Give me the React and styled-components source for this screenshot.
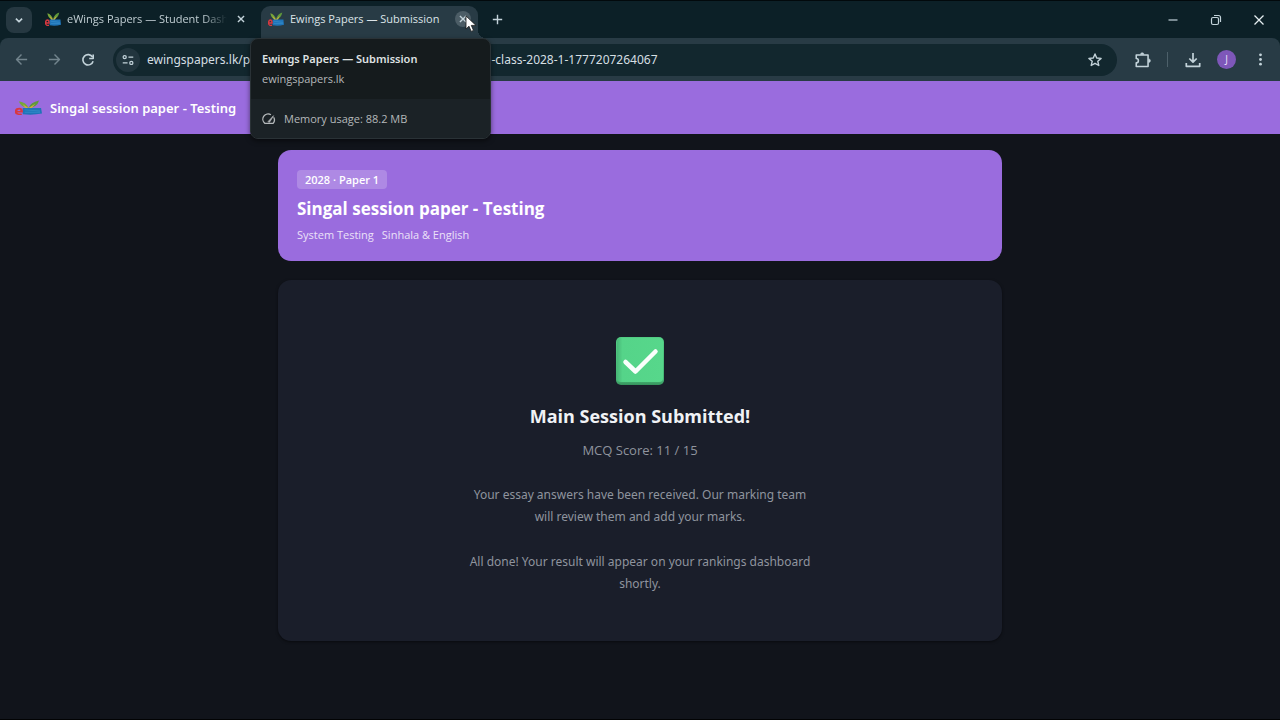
import React from "react";
import styled, { createGlobalStyle } from "styled-components";

const GlobalStyle = createGlobalStyle`
  *, *::before, *::after { box-sizing: border-box; }
  html, body { margin: 0; background: #11141b; }
  body { font-family: "Open Sans", "Noto Sans", sans-serif; font-size: 13px; color: #e8eaed; }
  button, input { font: inherit; color: inherit; border: 0; padding: 0; margin: 0; background: none; }
  h1, h2, p { margin: 0; }
`;

const Window = styled.div`
  display: flex;
  flex-direction: column;
  min-height: 100vh;
  background: #11141b;
  border-top: 1px solid #02090c;
  border-bottom: 1px solid #020304;
`;

const TabStrip = styled.div`
  display: flex;
  align-items: flex-end;
  height: 37px;
  padding-left: 6px;
  background: #0c2027;
`;

const IconButton = styled.button`
  display: flex;
  align-items: center;
  justify-content: center;
  flex: none;
  width: ${(p) => p.$width || 33}px;
  height: ${(p) => p.$height || 32}px;
  color: ${(p) => p.$color || "#c3d3da"};
`;

const TabSearch = styled(IconButton)`
  align-self: center;
  border-radius: 8px;
  background: #263841;
`;

const Tab = styled.div`
  position: relative;
  display: flex;
  align-items: center;
  flex: none;
  gap: 6px;
  width: ${(p) => p.$width}px;
  height: 32px;
  margin-left: ${(p) => p.$gap}px;
  padding: 0 7px 6px;
  border-radius: 9px 9px 0 0;
  background: ${(p) => (p.$active ? "#283b45" : "transparent")};

  &::after {
    content: "";
    display: ${(p) => (p.$active ? "block" : "none")};
    position: absolute;
    left: 100%;
    bottom: 0;
    width: 8px;
    height: 8px;
    background: radial-gradient(circle at 100% 0, transparent 8px, #283b45 8px);
  }
`;

const TabTitle = styled.span`
  flex: 1;
  min-width: 0;
  overflow: hidden;
  white-space: nowrap;
  font-size: 11px;
  line-height: 16px;
  color: ${(p) => (p.$fade ? "#c1ced3" : "#dce4e8")};
  mask-image: ${(p) =>
    p.$fade ? "linear-gradient(to right, #000 85%, transparent)" : "none"};
`;

const TabClose = styled(IconButton)`
  border-radius: 50%;
  background: ${(p) => (p.$hover ? "#4c5d66" : "transparent")};
`;

const Pointer = styled.svg`
  position: absolute;
  left: 204px;
  top: 9px;
  z-index: 4;
`;

const HoverCard = styled.div`
  position: absolute;
  left: -11px;
  top: 32px;
  z-index: 3;
  width: 241px;
  overflow: hidden;
  border: 1px solid #2a3236;
  border-radius: 8px;
  background: #151b1d;
  box-shadow: 0 2px 5px rgba(0, 0, 0, 0.5);
`;

const HoverInfo = styled.div`
  padding: 10px 11px;
`;

const HoverTitle = styled.div`
  font-family: "Noto Sans", sans-serif;
  font-size: 11px;
  font-weight: 600;
  line-height: 20px;
  color: #dfe1e2;
`;

const HoverHost = styled.div`
  font-size: 11px;
  line-height: 20px;
  color: #b4b8ba;
`;

const HoverMemory = styled.div`
  display: flex;
  align-items: center;
  gap: 8px;
  height: 39px;
  padding: 0 11px;
  font-size: 11px;
  color: #b4b8ba;
  background: #1b2226;
`;

const WindowControls = styled.div`
  display: flex;
  align-self: center;
  margin-left: auto;
`;

const ToolbarBack = styled.div`
  background: #0c2027;
`;

const Toolbar = styled.div`
  display: flex;
  align-items: center;
  height: 43px;
  padding: 0 3px 0 5px;
  border-radius: 8px 8px 0 0;
  background: #283b45;
`;

const AddressBar = styled.label`
  display: flex;
  align-items: center;
  flex: 1;
  min-width: 0;
  height: 32px;
  margin: 0 9px;
  padding: 0 6px 0 3px;
  border-radius: 16px;
  background: #12272e;
`;

const SiteInfo = styled(IconButton)`
  border-radius: 50%;
  background: #22353e;
`;

const AddressInput = styled.input`
  flex: 1;
  min-width: 0;
  height: 24px;
  padding-left: 7px;
  font-family: "Noto Sans", sans-serif;
  font-size: 12px;
  color: #d5dfe3;
  outline: none;
`;

const Divider = styled.span`
  width: 1px;
  height: 15px;
  margin: 0 8px;
  background: #4d606a;
`;

const Avatar = styled.button`
  width: 19px;
  height: 19px;
  margin: 0 8px;
  border-radius: 50%;
  background: #7e57b9;
  color: #ecdffa;
  font-size: 10px;
  line-height: 19px;
`;

const PaperHeader = styled.header`
  display: flex;
  align-items: center;
  gap: 8px;
  height: 53px;
  padding: 0 15px;
  background: #9a6cde;
`;

const PaperName = styled.span`
  font-family: "Noto Sans", sans-serif;
  font-size: 13px;
  font-weight: 600;
  line-height: 20px;
  color: #fff;
`;

const Main = styled.main`
  display: flex;
  flex-direction: column;
  gap: 19px;
  width: 100%;
  max-width: 756px;
  margin: 0 auto;
  padding: 16px;
`;

const Card = styled.section`
  border-radius: 13px;
`;

const PaperCard = styled(Card)`
  display: flex;
  flex-direction: column;
  align-items: flex-start;
  padding: 20px 19px 18px;
  background: #9a6cde;
`;

const Badge = styled.span`
  padding: 0 8px;
  border-radius: 4px;
  background: rgba(255, 255, 255, 0.2);
  font-size: 11px;
  font-weight: 600;
  line-height: 19px;
  color: #fff;
`;

const PaperTitle = styled.h1`
  margin-top: 8px;
  font-size: 17px;
  font-weight: 700;
  line-height: 24px;
  color: #fff;
`;

const Meta = styled.div`
  display: flex;
  gap: 8px;
  margin-top: 6px;
  font-size: 11px;
  line-height: 16px;
  color: #ebe1f8;
`;

const ResultCard = styled(Card)`
  display: flex;
  flex-direction: column;
  align-items: center;
  padding: 57px 24px 46px;
  text-align: center;
  background: #1a1e2a;
  box-shadow: 0 1px 3px rgba(0, 0, 0, 0.5);
`;

const ResultTitle = styled.h2`
  margin-top: 19px;
  font-size: 18px;
  font-weight: 700;
  line-height: 24px;
  color: #f0f2f5;
`;

const ResultScore = styled.p`
  margin-top: 11px;
  font-size: 13px;
  line-height: 22px;
  color: #8f949e;
`;

const ResultText = styled.p`
  max-width: 350px;
  margin-top: 23px;
  font-family: "Noto Sans", sans-serif;
  font-size: 12px;
  line-height: 22px;
  color: #8f949e;
`;

function Logo({ width, height }) {
  return (
    <svg width={width} height={height} viewBox="0 0 28 26" preserveAspectRatio="none" aria-hidden="true">
      <path d="M4 2 Q12 4 14 13 Q6 12 4 2Z" fill="#77a53a" />
      <path d="M25 1 Q16 4 14 13 Q23 12 25 1Z" fill="#5f983c" />
      <path d="M8 7 L14 13 L21 6 L17 14 H11Z" fill="#cfae3e" />
      <path d="M8 13 H27 L28 22 Q18 25 8 23Z" fill="#1f74b8" />
      <path d="M10 16 L26 18 M10 20 H26" fill="none" stroke="#3188c6" strokeWidth="1.500" />
      <path d="M2 19 H7 Q7 14 4.500 14 Q1 14 1 19 Q1 24 7 23" fill="none" stroke="#d93840" strokeWidth="2.500" />
    </svg>
  );
}

const shapes = {
  chevron: <path d="M4.500 6.500 8 10l3.500-3.500" strokeWidth="2" />,
  close: <path d="M4.500 4.500l7 7M11.500 4.500l-7 7" strokeWidth="1.600" />,
  plus: <path d="M8 3v10M3 8h10" strokeWidth="1.500" />,
  minimize: <path d="M3.500 8h9" strokeWidth="1.200" />,
  restore: (
    <>
      <rect x="3.500" y="5.500" width="7" height="7" rx="1.500" strokeWidth="1.200" />
      <path d="M6 3.500h4.500a2 2 0 0 1 2 2V10" strokeWidth="1.200" />
    </>
  ),
  windowClose: <path d="M3.500 3.500l9 9M12.500 3.500l-9 9" strokeWidth="1.300" />,
  back: <path d="M14 8H3M8 2.700 2.700 8 8 13.300" strokeWidth="1.500" />,
  forward: <path d="M2 8h11M8 2.700 13.300 8 8 13.300" strokeWidth="1.500" />,
  reload: (
    <>
      <path d="M12.600 5.200A5.200 5.200 0 1 0 13.100 9.200" strokeWidth="1.600" />
      <path d="M13.200 2.500v4H9.200" strokeWidth="1.600" />
    </>
  ),
  tune: (
    <>
      <circle cx="4.200" cy="4.700" r="1.800" strokeWidth="1.400" />
      <circle cx="11.800" cy="11.300" r="1.800" strokeWidth="1.400" />
      <path d="M8.500 4.700H14M2 11.300h5.500" strokeWidth="1.500" />
    </>
  ),
  star: (
    <path
      d="M8 2l1.700 4 4.400.400-3.300 2.900 1 4.200L8 11.300l-3.800 2.200 1-4.200L1.900 6.400 6.300 6z"
      strokeWidth="1.400"
    />
  ),
  puzzle: (
    <>
      <path d="M2 3.500h10.500v10.200H2v-3.200a1.900 1.900 0 0 0 0-3.800z" strokeWidth="1.400" />
      <path
        d="M5.800 3a1.500 1.500 0 0 1 3 0zM13 7a1.600 1.600 0 0 1 0 3.200z"
        fill="currentColor"
        strokeWidth="0.500"
      />
    </>
  ),
  download: <path d="M8 1v9M4.300 6.500 8 10.200l3.700-3.700M1.300 11v3.300h13.400V11" strokeWidth="1.700" />,
  more: (
    <g fill="currentColor" stroke="none">
      <circle cx="8" cy="3" r="1.500" />
      <circle cx="8" cy="8" r="1.500" />
      <circle cx="8" cy="13" r="1.500" />
    </g>
  ),
  speed: (
    <>
      <path d="M10.200 3.200A6 6 0 0 0 3.300 13h9.400A6 6 0 0 0 13.300 6" strokeWidth="1.500" />
      <path d="M7 10.800 13.200 4.200 9 11.200a1.200 1.200 0 0 1-2-.400z" fill="currentColor" strokeWidth="0.800" />
    </>
  ),
};

function Icon({ name, size = 16 }) {
  return (
    <svg
      width={size}
      height={size}
      viewBox="0 0 16 16"
      fill="none"
      stroke="currentColor"
      strokeLinejoin="round"
      aria-hidden="true"
    >
      {shapes[name]}
    </svg>
  );
}

function CheckMark() {
  return (
    <svg width="48" height="48" viewBox="0 0 48 48" role="img" aria-label="Submitted">
      <defs>
        <linearGradient id="edge" x1="0" y1="0" x2="0" y2="1">
          <stop offset="0" stopColor="#52cc83" />
          <stop offset="0.900" stopColor="#46b574" />
          <stop offset="1" stopColor="#36925c" />
        </linearGradient>
        <linearGradient id="face" x1="0" y1="0" x2="1" y2="0">
          <stop offset="0" stopColor="#48b877" />
          <stop offset="0.120" stopColor="#55d489" />
          <stop offset="1" stopColor="#57d78b" />
        </linearGradient>
      </defs>
      <rect width="48" height="48" rx="5" fill="url(#edge)" />
      <rect x="1" y="1" width="46" height="44" rx="4" fill="url(#face)" />
      <path
        d="M9.500 25 19.500 34.500 39.500 14.500"
        fill="none"
        stroke="#fafffc"
        strokeWidth="4.500"
        strokeLinecap="round"
        strokeLinejoin="round"
      />
    </svg>
  );
}

export default function App() {
  return (
    <>
      <GlobalStyle />
      <Window>
        <TabStrip>
          <TabSearch $width={26} $height={26} aria-label="Search tabs">
            <Icon name="chevron" size={14} />
          </TabSearch>
          <Tab $width={218} $gap={6}>
            <Logo width={16} height={15} />
            <TabTitle $fade>eWings Papers — Student Dashboard</TabTitle>
            <TabClose $width={16} $height={16} aria-label="Close tab">
              <Icon name="close" size={14} />
            </TabClose>
          </Tab>
          <Tab $active $width={217} $gap={5}>
            <Logo width={16} height={15} />
            <TabTitle>Ewings Papers — Submission</TabTitle>
            <TabClose $hover $width={16} $height={16} aria-label="Close tab">
              <Icon name="close" size={14} />
            </TabClose>
            <HoverCard role="tooltip">
              <HoverInfo>
                <HoverTitle>Ewings Papers — Submission</HoverTitle>
                <HoverHost>ewingspapers.lk</HoverHost>
              </HoverInfo>
              <HoverMemory>
                <Icon name="speed" size={14} />
                Memory usage: 88.2 MB
              </HoverMemory>
            </HoverCard>
            <Pointer width="12" height="18" viewBox="0 0 12 18" aria-hidden="true">
              <path
                d="M1 1v13l3-2.800 2.200 5.200 2.300-1-2.200-5H11z"
                fill="#fff"
                stroke="#1a1a1a"
                strokeWidth="0.800"
              />
            </Pointer>
          </Tab>
          <IconButton $width={38} $height={37} aria-label="New tab">
            <Icon name="plus" size={15} />
          </IconButton>
          <WindowControls>
            <IconButton $width={43} aria-label="Minimize">
              <Icon name="minimize" />
            </IconButton>
            <IconButton $width={43} aria-label="Restore">
              <Icon name="restore" />
            </IconButton>
            <IconButton $width={43} $color="#e6eef1" aria-label="Close window">
              <Icon name="windowClose" />
            </IconButton>
          </WindowControls>
        </TabStrip>

        <ToolbarBack>
          <Toolbar>
            <IconButton $color="#72848d" aria-label="Back">
              <Icon name="back" size={15} />
            </IconButton>
            <IconButton $color="#72848d" aria-label="Forward">
              <Icon name="forward" size={15} />
            </IconButton>
            <IconButton aria-label="Reload">
              <Icon name="reload" />
            </IconButton>
            <AddressBar>
              <SiteInfo $width={24} $height={24} aria-label="Site information">
                <Icon name="tune" size={14} />
              </SiteInfo>
              <AddressInput
                aria-label="Address"
                type="text"
                defaultValue="ewingspapers.lk/papers/paper/session/submission/al-testing-class-2028-1-1777207264067"
              />
              <IconButton aria-label="Bookmark this page">
                <Icon name="star" />
              </IconButton>
            </AddressBar>
            <IconButton aria-label="Extensions">
              <Icon name="puzzle" size={18} />
            </IconButton>
            <Divider />
            <IconButton aria-label="Downloads">
              <Icon name="download" />
            </IconButton>
            <Avatar aria-label="Profile">J</Avatar>
            <IconButton aria-label="Menu">
              <Icon name="more" size={15} />
            </IconButton>
          </Toolbar>
        </ToolbarBack>

        <PaperHeader>
          <Logo width={27} height={16} />
          <PaperName>Singal session paper - Testing</PaperName>
        </PaperHeader>

        <Main>
          <PaperCard>
            <Badge>2028 · Paper 1</Badge>
            <PaperTitle>Singal session paper - Testing</PaperTitle>
            <Meta>
              <span>System Testing</span>
              <span>Sinhala &amp; English</span>
            </Meta>
          </PaperCard>
          <ResultCard>
            <CheckMark />
            <ResultTitle>Main Session Submitted!</ResultTitle>
            <ResultScore>MCQ Score: 11 / 15</ResultScore>
            <ResultText>
              Your essay answers have been received. Our marking team will review them and add your marks.
            </ResultText>
            <ResultText>
              All done! Your result will appear on your rankings dashboard shortly.
            </ResultText>
          </ResultCard>
        </Main>
      </Window>
    </>
  );
}
